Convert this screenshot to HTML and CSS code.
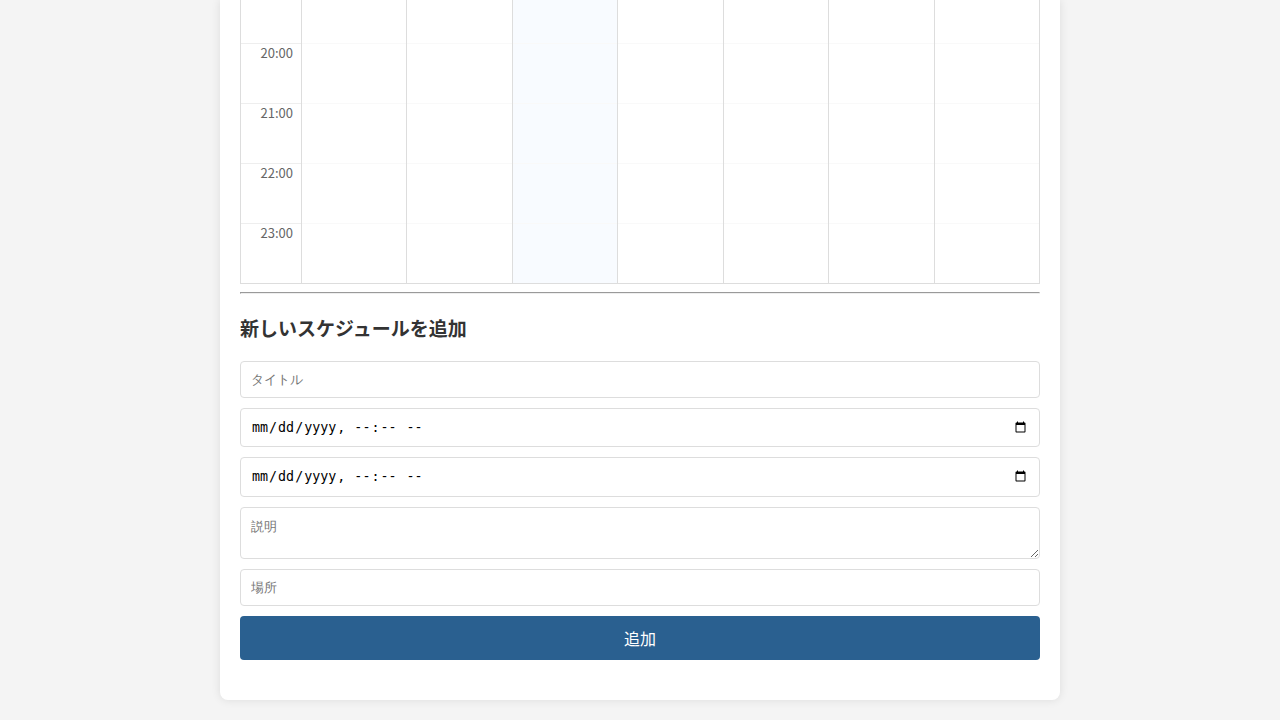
FILE: index.html
```html
<!DOCTYPE html>
<html lang="ja">
<head>
<meta charset="UTF-8">
<meta name="viewport" content="width=device-width, initial-scale=1">
<title>スケジュール</title>
<link rel="stylesheet" href="styles.css">
</head>
<body>
<main class="container">
  <div class="calendar">
    <div class="times">
      <div class="time"></div>
      <div class="time">20:00</div>
      <div class="time">21:00</div>
      <div class="time">22:00</div>
      <div class="time">23:00</div>
    </div>
    <div class="day"><div class="slot"></div><div class="slot"></div><div class="slot"></div><div class="slot"></div><div class="slot"></div></div>
    <div class="day"><div class="slot"></div><div class="slot"></div><div class="slot"></div><div class="slot"></div><div class="slot"></div></div>
    <div class="day today"><div class="slot"></div><div class="slot"></div><div class="slot"></div><div class="slot"></div><div class="slot"></div></div>
    <div class="day"><div class="slot"></div><div class="slot"></div><div class="slot"></div><div class="slot"></div><div class="slot"></div></div>
    <div class="day"><div class="slot"></div><div class="slot"></div><div class="slot"></div><div class="slot"></div><div class="slot"></div></div>
    <div class="day"><div class="slot"></div><div class="slot"></div><div class="slot"></div><div class="slot"></div><div class="slot"></div></div>
    <div class="day"><div class="slot"></div><div class="slot"></div><div class="slot"></div><div class="slot"></div><div class="slot"></div></div>
  </div>
  <hr>
  <h3 class="heading">新しいスケジュールを追加</h3>
  <form class="form">
    <input class="field" type="text" placeholder="タイトル" aria-label="タイトル">
    <input class="field" type="datetime-local" aria-label="開始日時">
    <input class="field" type="datetime-local" aria-label="終了日時">
    <textarea class="field" placeholder="説明" aria-label="説明"></textarea>
    <input class="field" type="text" placeholder="場所" aria-label="場所">
    <button class="submit" type="submit">追加</button>
  </form>
</main>
</body>
</html>
```
FILE: styles.css
```css
body {
  margin: 0;
  background: #f4f4f4;
  color: #333;
  font-family: "Noto Sans CJK JP", sans-serif;
}

.container {
  box-sizing: border-box;
  max-width: 840px;
  margin: 0 auto 20px;
  padding: 0 20px 40px;
  background: #fff;
  border-radius: 0 0 8px 8px;
  box-shadow: 0 0 10px rgba(0, 0, 0, 0.1);
}

.calendar {
  display: grid;
  grid-template-columns: 60px repeat(7, 1fr);
  border: 1px solid #ddd;
  border-top: 0;
}

.time {
  box-sizing: border-box;
  height: 60px;
  padding-right: 8px;
  border-top: 1px solid #eee;
  color: #666;
  font-size: 13px;
  line-height: 18px;
  text-align: right;
}

.day {
  border-left: 1px solid #ddd;
}

.slot {
  box-sizing: border-box;
  height: 60px;
  border-top: 1px solid #f9f9f9;
}

.time:first-child,
.slot:first-child {
  height: 43px;
  border-top: 0;
}

.today {
  background: #f8fbff;
}

hr {
  margin: 8px 0;
}

.heading {
  margin: 20px 0;
  font-size: 19px;
  line-height: 27px;
}

.form {
  display: flex;
  flex-direction: column;
  gap: 10px;
}

.field {
  box-sizing: border-box;
  width: 100%;
  margin: 0;
  padding: 10px;
  border: 1px solid #ddd;
  border-radius: 4px;
}

.submit {
  padding: 10px;
  border: 0;
  border-radius: 4px;
  background: #2a6090;
  color: #fff;
  font-family: inherit;
  font-size: 16px;
  line-height: 24px;
}
```
